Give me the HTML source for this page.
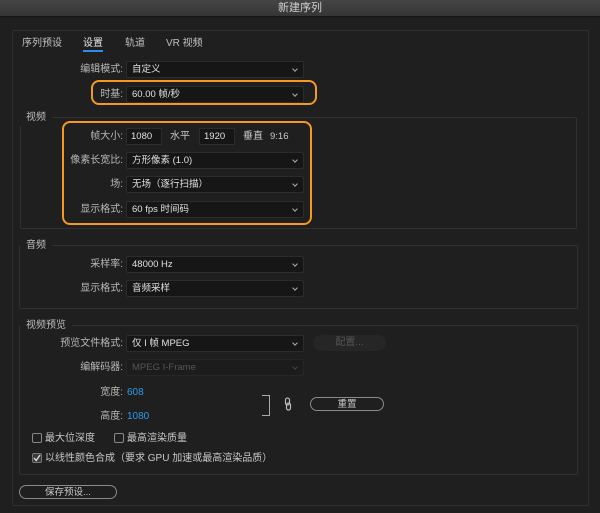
<!DOCTYPE html>
<html><head><meta charset="utf-8"><style>
*{margin:0;padding:0;box-sizing:border-box}
body{width:600px;height:513px;background:#1f1f1f;font-family:"Liberation Sans","Noto Sans CJK SC",sans-serif;font-size:10px;color:#c8c8c8;position:relative;overflow:hidden}
.a{position:absolute;white-space:nowrap;line-height:17px}
.title{left:0;top:0;width:600px;height:17px;background:linear-gradient(#454545,#363636);border-bottom:1px solid #151515;text-align:center;line-height:17px;font-size:11px;color:#d0d0d0}
.panel{left:12px;top:30px;width:577px;height:476px;border:1px solid #2f2f2f;border-radius:2px}
.grp{border:1px solid #303030;border-radius:2px}
.gl{background:#1f1f1f;padding:0 6px;font-size:10px;color:#bdbdbd}
.lbl{text-align:right;width:120px;color:#b8b8b8}
.dd{background:#161616;border:1px solid #2c2c2c;border-radius:2px;height:17px;line-height:16px;padding-left:5px;color:#e0e0e0;font-size:9.5px}
.dd:after{content:"";position:absolute;right:6px;top:5px;width:3px;height:3px;border-right:1px solid #aaa;border-bottom:1px solid #aaa;transform:rotate(45deg)}
.dis{color:#555;background:#1c1c1c;border-color:#262626}
.dis:after{border-color:#444}
.inp{background:#161616;border:1px solid #2c2c2c;height:17px;line-height:16px;padding-left:4px;color:#e0e0e0;font-size:9.5px}
.or{border:2px solid #f39a1e;border-radius:8px}
.btn{border:1px solid #8a8a8a;border-radius:8px;height:14px;line-height:13px;text-align:center;color:#c8c8c8;font-size:9.5px}
.cb{width:10px;height:10px;border:1px solid #888;border-radius:2px}
.blue{color:#2d9bf0}
</style></head><body>
<div class="a title">新建序列</div>
<div class="a panel"></div>
<div class="a" style="left:22px;top:35px;color:#c0c0c0">序列预设</div>
<div class="a" style="left:83px;top:35px;color:#e8e8e8">设置</div>
<div class="a" style="left:83px;top:50px;width:20px;height:2px;background:#2d8ceb"></div>
<div class="a" style="left:125px;top:35px;color:#c0c0c0">轨道</div>
<div class="a" style="left:166px;top:35px;color:#c0c0c0">VR 视频</div>

<div class="a lbl" style="left:3px;top:61px">编辑模式:</div>
<div class="a dd" style="left:126px;top:61px;width:178px">自定义</div>
<div class="a or" style="left:91px;top:80px;width:226px;height:25px"></div>
<div class="a lbl" style="left:3px;top:86px">时基:</div>
<div class="a dd" style="left:126px;top:86px;width:178px">60.00 帧/秒</div>

<div class="a grp" style="left:20px;top:117px;width:557px;height:112px"></div>
<div class="a gl" style="left:20px;top:109px">视频</div>
<div class="a or" style="left:62px;top:121px;width:250px;height:104px"></div>
<div class="a lbl" style="left:3px;top:128px">帧大小:</div>
<div class="a inp" style="left:126px;top:128px;width:36px">1080</div>
<div class="a" style="left:170px;top:128px">水平</div>
<div class="a inp" style="left:199px;top:128px;width:36px">1920</div>
<div class="a" style="left:243px;top:128px">垂直</div>
<div class="a" style="left:270px;top:128px;font-size:9.5px">9:16</div>
<div class="a lbl" style="left:3px;top:152px">像素长宽比:</div>
<div class="a dd" style="left:126px;top:152px;width:178px">方形像素 (1.0)</div>
<div class="a lbl" style="left:3px;top:176px">场:</div>
<div class="a dd" style="left:126px;top:176px;width:178px">无场（逐行扫描）</div>
<div class="a lbl" style="left:3px;top:201px">显示格式:</div>
<div class="a dd" style="left:126px;top:201px;width:178px">60 fps 时间码</div>

<div class="a grp" style="left:19px;top:245px;width:559px;height:64px"></div>
<div class="a gl" style="left:20px;top:237px">音频</div>
<div class="a lbl" style="left:3px;top:256px">采样率:</div>
<div class="a dd" style="left:126px;top:256px;width:178px">48000 Hz</div>
<div class="a lbl" style="left:3px;top:280px">显示格式:</div>
<div class="a dd" style="left:126px;top:280px;width:178px">音频采样</div>

<div class="a grp" style="left:19px;top:325px;width:559px;height:150px"></div>
<div class="a gl" style="left:20px;top:317px">视频预览</div>
<div class="a lbl" style="left:3px;top:335px">预览文件格式:</div>
<div class="a dd" style="left:126px;top:335px;width:178px">仅 I 帧 MPEG</div>
<div class="a" style="left:313px;top:335px;width:73px;height:16px;border-radius:8px;background:#262626;color:#555;text-align:center;line-height:16px">配置...</div>
<div class="a lbl" style="left:3px;top:359px">编解码器:</div>
<div class="a dd dis" style="left:126px;top:359px;width:178px">MPEG I-Frame</div>
<div class="a lbl" style="left:3px;top:384px">宽度:</div>
<div class="a blue" style="left:127px;top:384px">608</div>
<div class="a lbl" style="left:3px;top:408px">高度:</div>
<div class="a blue" style="left:127px;top:408px">1080</div>
<div class="a" style="left:262px;top:395px;width:8px;height:21px;border:1px solid #aaa;border-left:none"></div>
<svg class="a" style="left:284px;top:397px" width="8" height="14" viewBox="0 0 8 14"><rect x="1.5" y="1" width="4" height="7" rx="2" fill="none" stroke="#bbb" stroke-width="1.2"/><rect x="2.5" y="6" width="4" height="7" rx="2" fill="none" stroke="#bbb" stroke-width="1.2"/></svg>
<div class="a btn" style="left:310px;top:397px;width:74px">重置</div>
<div class="a cb" style="left:32px;top:433px"></div>
<div class="a" style="left:45px;top:430px">最大位深度</div>
<div class="a cb" style="left:114px;top:433px"></div>
<div class="a" style="left:127px;top:430px">最高渲染质量</div>
<div class="a cb" style="left:32px;top:453px;background:#3a3a3a;border-color:#777"></div>
<svg class="a" style="left:32px;top:453px" width="10" height="10" viewBox="0 0 10 10"><path d="M2 5 L4.2 7.5 L8 2" fill="none" stroke="#ddd" stroke-width="1.4"/></svg>
<div class="a" style="left:45px;top:450px">以线性颜色合成（要求 GPU 加速或最高渲染品质）</div>
<div class="a btn" style="left:19px;top:485px;width:98px">保存预设...</div>
</body></html>
